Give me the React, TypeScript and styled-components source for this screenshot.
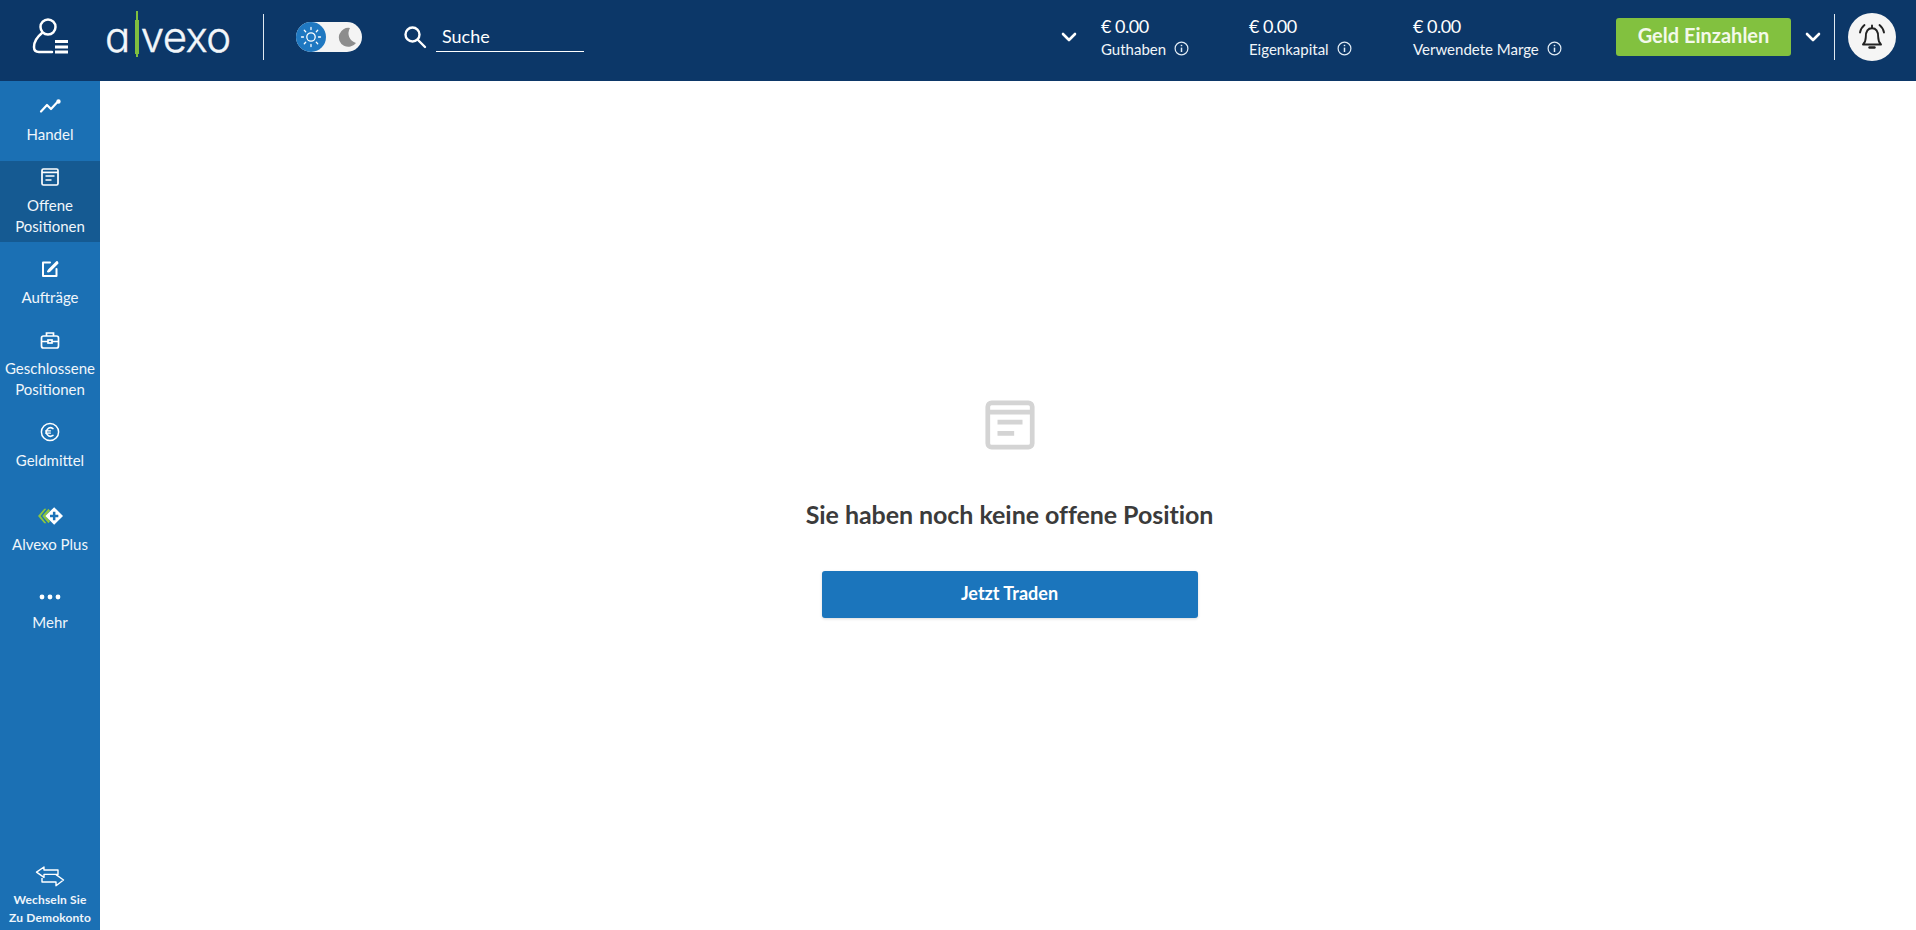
import { ReactNode } from "react";
import styled, { createGlobalStyle } from "styled-components";

const GlobalStyle = createGlobalStyle`
	html, body {
		margin: 0;
		padding: 0;
		height: 100%;
		background: #fff;
		font-family: Lato, "Open Sans", sans-serif;
	}
	* { box-sizing: border-box; }
`;

const UserIcon = () => (
	<svg width="37" height="37" viewBox="0 0 37 37" fill="none" stroke="#fff" strokeWidth="2.5" strokeLinecap="round">
		<circle cx="16" cy="9" r="7.5" />
		<path d="M10 15 C5 19 2 24 2 29 C2 33 4 34 7 34 H20" />
		<path d="M23 23.5 H36 M23 29 H36 M23 34 H36" strokeWidth="3" strokeLinecap="butt" />
	</svg>
);

const SunIcon = () => (
	<svg width="24" height="24" viewBox="0 0 24 24" fill="none" stroke="#fff" strokeWidth="1.3" strokeLinecap="round">
		<circle cx="12" cy="12" r="4.2" />
		<path d="M12 2.5v2M12 19.5v2M2.5 12h2M19.5 12h2M5.3 5.3l1.4 1.4M17.3 17.3l1.4 1.4M5.3 18.7l1.4-1.4M17.3 6.7l1.4-1.4" />
	</svg>
);

const MoonIcon = () => (
	<svg width="20" height="20" viewBox="0 0 20 20">
		<path d="M13 1 A9.5 9.5 0 1 0 19 16 A10 10 0 0 1 13 1 Z" fill="#8d8d8d" />
	</svg>
);

const SearchIcon = () => (
	<svg width="24" height="24" viewBox="0 0 24 24" fill="none" stroke="#fff" strokeWidth="2.4" strokeLinecap="round">
		<circle cx="9.5" cy="9.5" r="7" />
		<path d="M15 15 L22 22" />
	</svg>
);

const Chevron = () => (
	<svg width="16" height="10" viewBox="0 0 16 10" fill="none" stroke="#fff" strokeWidth="2.6" strokeLinecap="round" strokeLinejoin="round">
		<path d="M2 2 L8 8 L14 2" />
	</svg>
);

const InfoIcon = () => (
	<svg width="15" height="15" viewBox="0 0 15 15" fill="none" stroke="#e2ecf5" strokeWidth="1.2">
		<circle cx="7.5" cy="7.5" r="6.4" />
		<path d="M7.5 6.6 V11" strokeWidth="1.5" />
		<path d="M7.5 3.8 V5.2" strokeWidth="1.5" />
	</svg>
);

const BellIcon = () => (
	<svg width="30" height="30" viewBox="0 0 30 30" fill="none" stroke="#222" strokeWidth="1.9" strokeLinecap="round" strokeLinejoin="round">
		<path d="M6 22.5 C8 20.5 8.8 19 8.8 15 C8.8 9.5 11 6.2 15 6.2 C19 6.2 21.2 9.5 21.2 15 C21.2 19 22 20.5 24 22.5 Z" />
		<path d="M12.5 25.5 H17.5" strokeWidth="2.4" />
		<path d="M15 3.5 V6" />
		<path d="M7.5 3 C5 5 3.5 7.5 3 10.5 M22.5 3 C25 5 26.5 7.5 27 10.5" />
	</svg>
);

const ChartIcon = () => (
	<svg width="22" height="18" viewBox="0 0 22 18" fill="none" stroke="#fff" strokeWidth="2.2" strokeLinecap="round" strokeLinejoin="round">
		<path d="M2 14.5 L8 8 L12 12 L18 5.5" />
		<circle cx="19.5" cy="4.5" r="1.1" />
	</svg>
);

const ListIcon = ({ size = 18, color = "#fff", weight = 1.7 }: { size?: number; color?: string; weight?: number }) => (
	<svg width={size} height={size} viewBox="0 0 18 18" fill="none" stroke={color} strokeWidth={weight}>
		<rect x="1" y="1" width="16" height="16" rx="1.4" />
		<path d="M1 4.4 H17" />
		<path d="M4.5 8 H13.5 M4.5 12 H10.5" />
	</svg>
);

const EditIcon = () => (
	<svg width="18" height="18" viewBox="0 0 18 18" fill="none" stroke="#fff" strokeWidth="2" strokeLinecap="round" strokeLinejoin="round">
		<path d="M9 2.5 H2 V16 H15.5 V9" />
		<path d="M16 2 L8 10 L7 11.5 L8.5 11 L16.5 3" />
	</svg>
);

const CaseIcon = () => (
	<svg width="20" height="18" viewBox="0 0 20 18" fill="none" stroke="#fff" strokeWidth="1.7">
		<rect x="1.5" y="5" width="17" height="12" rx="2" />
		<path d="M6.5 5 V2 H13.5 V5" />
		<path d="M1.5 10.5 H8 M12 10.5 H18.5" />
		<rect x="8" y="9" width="4" height="3" />
	</svg>
);

const EuroIcon = () => (
	<svg width="20" height="20" viewBox="0 0 20 20" fill="none" stroke="#fff" strokeWidth="1.5" strokeLinecap="round">
		<circle cx="10" cy="10" r="8.6" />
		<path d="M13 6.6 A4.2 4.2 0 1 0 13 13.4" />
		<path d="M5.6 8.9 H10.5 M5.6 11.1 H10.5" strokeWidth="1.1" />
	</svg>
);

const PlusIcon = () => (
	<svg width="26" height="20" viewBox="0 0 25 18">
		<path d="M7 2 L1 9 L7 16 L9 16 L3.5 9 L9 2 Z" fill="#8cc63f" />
		<path d="M11 2 L5 9 L11 16 L12.6 14 L8 9 L12.6 4 Z" fill="#8cc63f" />
		<path d="M16.5 0.5 L25 9 L16.5 17.5 L8 9 Z" fill="#fff" />
		<path d="M16.5 5 V13 M12.5 9 H20.5" stroke="#1b73b9" strokeWidth="2.4" />
	</svg>
);

const DotsIcon = () => (
	<svg width="22" height="6" viewBox="0 0 22 6" fill="#fff">
		<circle cx="3" cy="3" r="2.4" />
		<circle cx="11" cy="3" r="2.4" />
		<circle cx="19" cy="3" r="2.4" />
	</svg>
);

const SwitchIcon = () => (
	<svg width="30" height="21" viewBox="0 0 30 21" fill="none" stroke="#fff" strokeWidth="1.4" strokeLinejoin="round">
		<path d="M9 1 L1.5 6.2 L9 11.4 V8.4 H23 V4 H9 Z" />
		<path d="M7 12 V16 H21 V19.8 L28.5 14 L21 8.6" />
	</svg>
);

const Stat = ({ width, label }: { width: number; label: string }) => (
	<StatBox $width={width}>
		<StatValue>€ 0.00</StatValue>
		<StatLabel>
			{label}
			<InfoIcon />
		</StatLabel>
	</StatBox>
);

const NavEntry = ({ icon, label, active, gapAbove, compact }: { icon: ReactNode; label: ReactNode; active?: boolean; gapAbove?: number; compact?: boolean }) => (
	<NavItem $active={active} $gapAbove={gapAbove}>
		<NavIcon>{icon}</NavIcon>
		<NavLabel $compact={compact}>{label}</NavLabel>
	</NavItem>
);

export default function App() {
	return (
		<Page>
			<GlobalStyle />
			<Header>
				<UserSlot>
					<UserIcon />
				</UserSlot>
				<Logo>
					a
					<Candle />
					vexo
				</Logo>
				<HeaderDivider />
				<Toggle>
					<ToggleKnob>
						<SunIcon />
					</ToggleKnob>
					<MoonIcon />
				</Toggle>
				<SearchBox>
					<SearchIcon />
					<SearchField>Suche</SearchField>
				</SearchBox>
				<Spacer />
				<ChevronSlot>
					<Chevron />
				</ChevronSlot>
				<Stat width={148} label="Guthaben" />
				<Stat width={164} label="Eigenkapital" />
				<Stat width={203} label="Verwendete Marge" />
				<DepositButton>Geld Einzahlen</DepositButton>
				<DepositChevron>
					<Chevron />
				</DepositChevron>
				<BellDivider />
				<BellCircle>
					<BellIcon />
				</BellCircle>
			</Header>
			<Body>
				<Sidebar>
					<NavEntry icon={<ChartIcon />} label="Handel" />
					<NavEntry icon={<ListIcon />} label={<>Offene<br />Positionen</>} active />
					<NavEntry icon={<EditIcon />} label="Aufträge" />
					<NavEntry icon={<CaseIcon />} label={<>Geschlossene<br />Positionen</>} />
					<NavEntry icon={<EuroIcon />} label="Geldmittel" />
					<NavEntry icon={<PlusIcon />} label="Alvexo Plus" gapAbove={13} />
					<NavEntry icon={<DotsIcon />} label="Mehr" gapAbove={10} compact />
					<SwitchAccount>
						<SwitchIcon />
						<SwitchLabel>
							Wechseln Sie
							<br />
							Zu Demokonto
						</SwitchLabel>
					</SwitchAccount>
				</Sidebar>
				<Main>
					<ListIcon size={50} color="#d4d4d4" weight={1.7} />
					<Heading>Sie haben noch keine offene Position</Heading>
					<TradeButton>Jetzt Traden</TradeButton>
				</Main>
			</Body>
		</Page>
	);
}

const Page = styled.div`
	height: 100vh;
	display: flex;
	flex-direction: column;
	overflow: hidden;
`;

const Header = styled.header`
	height: 81px;
	flex-shrink: 0;
	background: #0c3768;
	color: #fff;
	display: flex;
	align-items: center;
	padding: 0 0 8px 32px;
`;

const UserSlot = styled.div`
	width: 73px;
	display: flex;
`;

const Logo = styled.div`
	display: flex;
	align-items: center;
	width: 158px;
	font-family: Inter, Lato, sans-serif;
	font-feature-settings: "cv11";
	font-size: 42px;
	font-weight: 300;
	letter-spacing: -0.6px;
	-webkit-text-stroke: 0.4px #f2f6fa;
	color: #f2f6fa;
	line-height: 1;
`;

const Candle = styled.span`
	position: relative;
	width: 4px;
	height: 34px;
	margin: 0 2px 0 5px;
	background: #7fbf3f;

	&::before {
		content: "";
		position: absolute;
		left: 1px;
		top: -9px;
		width: 2px;
		height: 46px;
		background: #7fbf3f;
	}
`;

const HeaderDivider = styled.div`
	width: 1px;
	height: 46px;
	background: #dfe8f1;
`;

const Toggle = styled.div`
	width: 66px;
	height: 30px;
	margin-left: 32px;
	border-radius: 15px;
	background: #f4f4f4;
	display: flex;
	align-items: center;
	justify-content: space-between;
	padding-right: 5px;
`;

const ToggleKnob = styled.div`
	width: 30px;
	height: 30px;
	border-radius: 50%;
	background: #1f78c1;
	display: flex;
	align-items: center;
	justify-content: center;
`;

const SearchBox = styled.div`
	display: flex;
	align-items: center;
	margin-left: 41px;
	gap: 9px;
`;

const SearchField = styled.div`
	width: 148px;
	height: 30px;
	padding: 2px 0 0 6px;
	border-bottom: 1px solid #fff;
	font-size: 18px;
	line-height: 24px;
	color: #fff;
`;

const Spacer = styled.div`
	flex: 1;
`;

const ChevronSlot = styled.div`
	width: 40px;
	display: flex;
`;

const StatBox = styled.div<{ $width: number }>`
	width: ${(p) => p.$width}px;
	display: flex;
	flex-direction: column;
	gap: 2px;
`;

const StatValue = styled.div`
	font-size: 18px;
	line-height: 22px;
	letter-spacing: -0.5px;
`;

const StatLabel = styled.div`
	display: flex;
	align-items: center;
	gap: 8px;
	font-size: 15px;
	line-height: 20px;
	color: #f1f5f9;
`;

const DepositButton = styled.button`
	width: 175px;
	height: 38px;
	border: 0;
	border-radius: 3px;
	background: #82c13f;
	color: #f3f9ea;
	font-family: inherit;
	font-size: 20px;
	font-weight: 700;
	padding: 0 0 4px;
`;

const DepositChevron = styled.div`
	width: 43px;
	display: flex;
	justify-content: center;
`;

const BellDivider = styled.div`
	width: 1px;
	height: 46px;
	background: #dfe8f1;
`;

const BellCircle = styled.div`
	width: 48px;
	height: 48px;
	margin: 0 20px 0 13px;
	border-radius: 50%;
	background: #f5f5f5;
	display: flex;
	align-items: center;
	justify-content: center;
`;

const Body = styled.div`
	flex: 1;
	display: flex;
	min-height: 0;
`;

const Sidebar = styled.nav`
	width: 100px;
	flex-shrink: 0;
	background: #1b70b4;
	display: flex;
	flex-direction: column;
	gap: 11px;
	padding-top: 9px;
	color: #fff;
`;

const NavItem = styled.div<{ $active?: boolean; $gapAbove?: number }>`
	display: flex;
	flex-direction: column;
	align-items: center;
	padding: 7px 0 5px;
	margin-top: ${(p) => p.$gapAbove ?? 0}px;
	background: ${(p) => (p.$active ? "#155a92" : "transparent")};
`;

const NavIcon = styled.div`
	height: 18px;
	display: flex;
	align-items: center;
	justify-content: center;
`;

const NavLabel = styled.div<{ $compact?: boolean }>`
	margin-top: ${(p) => (p.$compact ? 6 : 9)}px;
	font-size: 15px;
	line-height: 21px;
	text-align: center;
	color: #f0f6fb;
`;

const SwitchAccount = styled.div`
	margin-top: auto;
	padding-bottom: 3px;
	display: flex;
	flex-direction: column;
	align-items: center;
	gap: 4px;
`;

const SwitchLabel = styled.div`
	font-size: 12px;
	font-weight: 700;
	line-height: 18px;
	letter-spacing: 0.15px;
	text-align: center;
	color: #eef5fb;
`;

const Main = styled.main`
	flex: 1;
	display: flex;
	flex-direction: column;
	align-items: center;
	padding: 319px 0 0 3px;
`;

const Heading = styled.h1`
	margin: 47px 0 0;
	font-size: 25px;
	line-height: 34px;
	font-weight: 700;
	letter-spacing: -0.06px;
	color: #3b3b3b;
`;

const TradeButton = styled.button`
	width: 376px;
	height: 47px;
	margin-top: 40px;
	border: 0;
	border-radius: 3px;
	background: #1b75bc;
	box-shadow: 0 1px 3px rgba(0, 0, 0, 0.15);
	color: #fff;
	font-family: inherit;
	font-size: 18px;
	font-weight: 700;
	padding: 0 0 3px;
`;
